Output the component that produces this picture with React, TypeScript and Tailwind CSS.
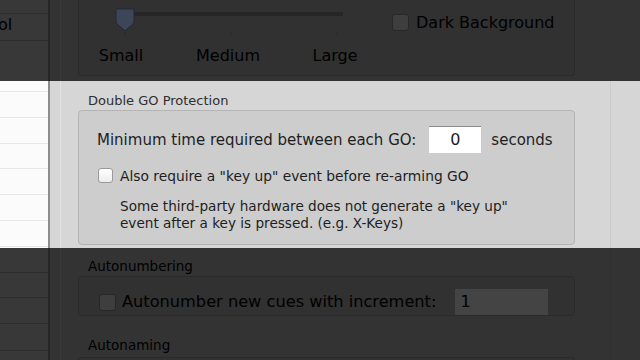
import React from "react";

const font = "font-['DejaVu_Sans','Liberation_Sans',sans-serif]";

const ListColumn = ({ dark, lines, height }: { dark: boolean; lines: number[]; height: number }) => (
  <div
    className={`relative w-[48px] shrink-0 ${dark ? "bg-[#383838]" : "bg-[#fbfbfb]"}`}
    style={{ height }}
  >
    {lines.map((y) => (
      <div
        key={y}
        className={`absolute left-0 right-0 h-px ${dark ? "bg-[#2e2e2e]" : "bg-[#e6e6e6]"}`}
        style={{ top: y }}
      />
    ))}
  </div>
);

const Checkbox = ({ dark, size }: { dark: boolean; size: string }) => (
  <span
    className={`${size} shrink-0 rounded-[3px] border ${
      dark
        ? "border-[#272727] bg-[#3e3e3e]"
        : "border-[#9a9a9a] bg-gradient-to-b from-[#ffffff] to-[#ececec]"
    }`}
  />
);

const TopBand = () => (
  <div className="flex h-[81px] bg-[#333333] text-black">
    <div className="relative w-[48px] shrink-0 bg-[#383838]">
      <div className="absolute left-0 right-0 top-[13px] h-px bg-[#2e2e2e]" />
      <div className="absolute left-0 right-0 top-[40px] h-px bg-[#2e2e2e]" />
      <span className="absolute left-[-2px] top-[15px] text-[16px] leading-[20px]">ol</span>
    </div>
    <div className="w-[2px] bg-[#262626]" />
    <div className="flex flex-1 pl-[10px]">
      <div className="flex flex-1 border-l border-[#3a3a3a] pl-[17px]">
        <div className="h-[76px] w-[497px] rounded-b-[4px] border-x border-b border-[#2a2a2a] bg-[#313131]">
          <div className="flex">
            <div className="ml-[2px] flex w-[300px] flex-col">
              <svg width="300" height="40" className="block">
                <rect x="52" y="12" width="210" height="4" rx="1" fill="#262626" />
                <path d="M35 9 h18 v14 l-9 8 l-9 -8 z" fill="#3c4658" stroke="#222834" strokeWidth="1" />
                <line x1="44" y1="32" x2="44" y2="36" stroke="#2a2a2a" />
                <line x1="150" y1="32" x2="150" y2="36" stroke="#2a2a2a" />
                <line x1="256" y1="32" x2="256" y2="36" stroke="#2a2a2a" />
              </svg>
              <div className="mt-[6px] flex text-[16px] leading-[20px]">
                <span className="w-[80px] text-center">Small</span>
                <span className="ml-[27px] w-[80px] text-center">Medium</span>
                <span className="ml-[27px] w-[80px] text-center">Large</span>
              </div>
            </div>
            <div className="ml-[11px] mt-[14px] flex h-[17px] items-center gap-[7px]">
              <Checkbox dark size="h-[17px] w-[17px]" />
              <span className="text-[16px] leading-[20px]">Dark Background</span>
            </div>
          </div>
        </div>
      </div>
    </div>
  </div>
);

const MiddleBand = () => (
  <div className="flex h-[167px] bg-[#d6d6d6] text-[#1e1e1e]">
    <ListColumn dark={false} height={167} lines={[10, 36, 62, 87, 113, 139, 165]} />
    <div className="w-[2px] bg-[#8c8c8c]" />
    <div className="flex flex-1 pl-[10px]">
      <div className="flex flex-1 border-l border-[#e2e2e2] pl-[17px]">
        <div className="flex w-[497px] flex-col">
          <div className="mt-[12px] pl-[10px] text-[13px] leading-[16px] text-[#2e2e2e]">Double GO Protection</div>
          <div className="mt-[1px] h-[135px] rounded-[4px] border border-[#b4b4b4] bg-[#cdcdcd] pl-[18px]">
            <div className="mt-[15px] flex h-[27px] items-center">
              <span className="text-[15px] leading-[18px]">Minimum time required between each GO:</span>
              <span className="ml-[13px] flex h-[27px] w-[52px] items-center justify-center border-t border-[#8a8a8a] bg-white text-[16px]">
                0
              </span>
              <span className="ml-[10px] text-[15px] leading-[18px]">seconds</span>
            </div>
            <div className="mt-[15px] flex h-[15px] items-center gap-[7px] pl-[1px]">
              <Checkbox dark={false} size="h-[15px] w-[15px]" />
              <span className="text-[13.8px] leading-[18px]">
                Also require a "key up" event before re-arming GO
              </span>
            </div>
            <div className="mt-[15px] pl-[23px] text-[13.6px] leading-[17px]">
              Some third-party hardware does not generate a "key up"
              <br />
              event after a key is pressed. (e.g. X-Keys)
            </div>
          </div>
        </div>
        <div className="ml-[35px] w-px bg-[#cbcbcb]" />
      </div>
    </div>
  </div>
);

const BottomBand = () => (
  <div className="flex h-[112px] bg-[#333333] text-black">
    <ListColumn dark height={112} lines={[24, 49, 75, 102]} />
    <div className="w-[2px] bg-[#262626]" />
    <div className="flex flex-1 pl-[10px]">
      <div className="flex flex-1 border-l border-[#3a3a3a] pl-[17px]">
        <div className="flex w-[497px] flex-col">
          <div className="mt-[10px] pl-[10px] text-[13.5px] leading-[16px]">Autonumbering</div>
          <div className="mt-[2px] h-[50px] rounded-[4px] border border-[#2a2a2a] bg-[#313131] pl-[20px]">
            <div className="mt-[12px] flex h-[26px] items-center">
              <Checkbox dark size="h-[17px] w-[17px]" />
              <span className="ml-[6px] text-[16.2px] leading-[20px]">
                Autonumber new cues with increment:
              </span>
              <span className="ml-[19px] flex h-[26px] w-[93px] items-center bg-[#444444] pl-[5px] text-[16px]">
                1
              </span>
            </div>
          </div>
          <div className="mt-[21px] pl-[10px] text-[13.5px] leading-[16px]">Autonaming</div>
          <div className="mt-[4px] h-[10px] rounded-t-[4px] border-x border-t border-[#2a2a2a] bg-[#313131]" />
        </div>
        <div className="ml-[35px] w-px bg-[#303030]" />
      </div>
    </div>
  </div>
);

export default function App() {
  return (
    <div className={`${font} h-[360px] w-[640px] overflow-hidden`}>
      <TopBand />
      <MiddleBand />
      <BottomBand />
    </div>
  );
}
